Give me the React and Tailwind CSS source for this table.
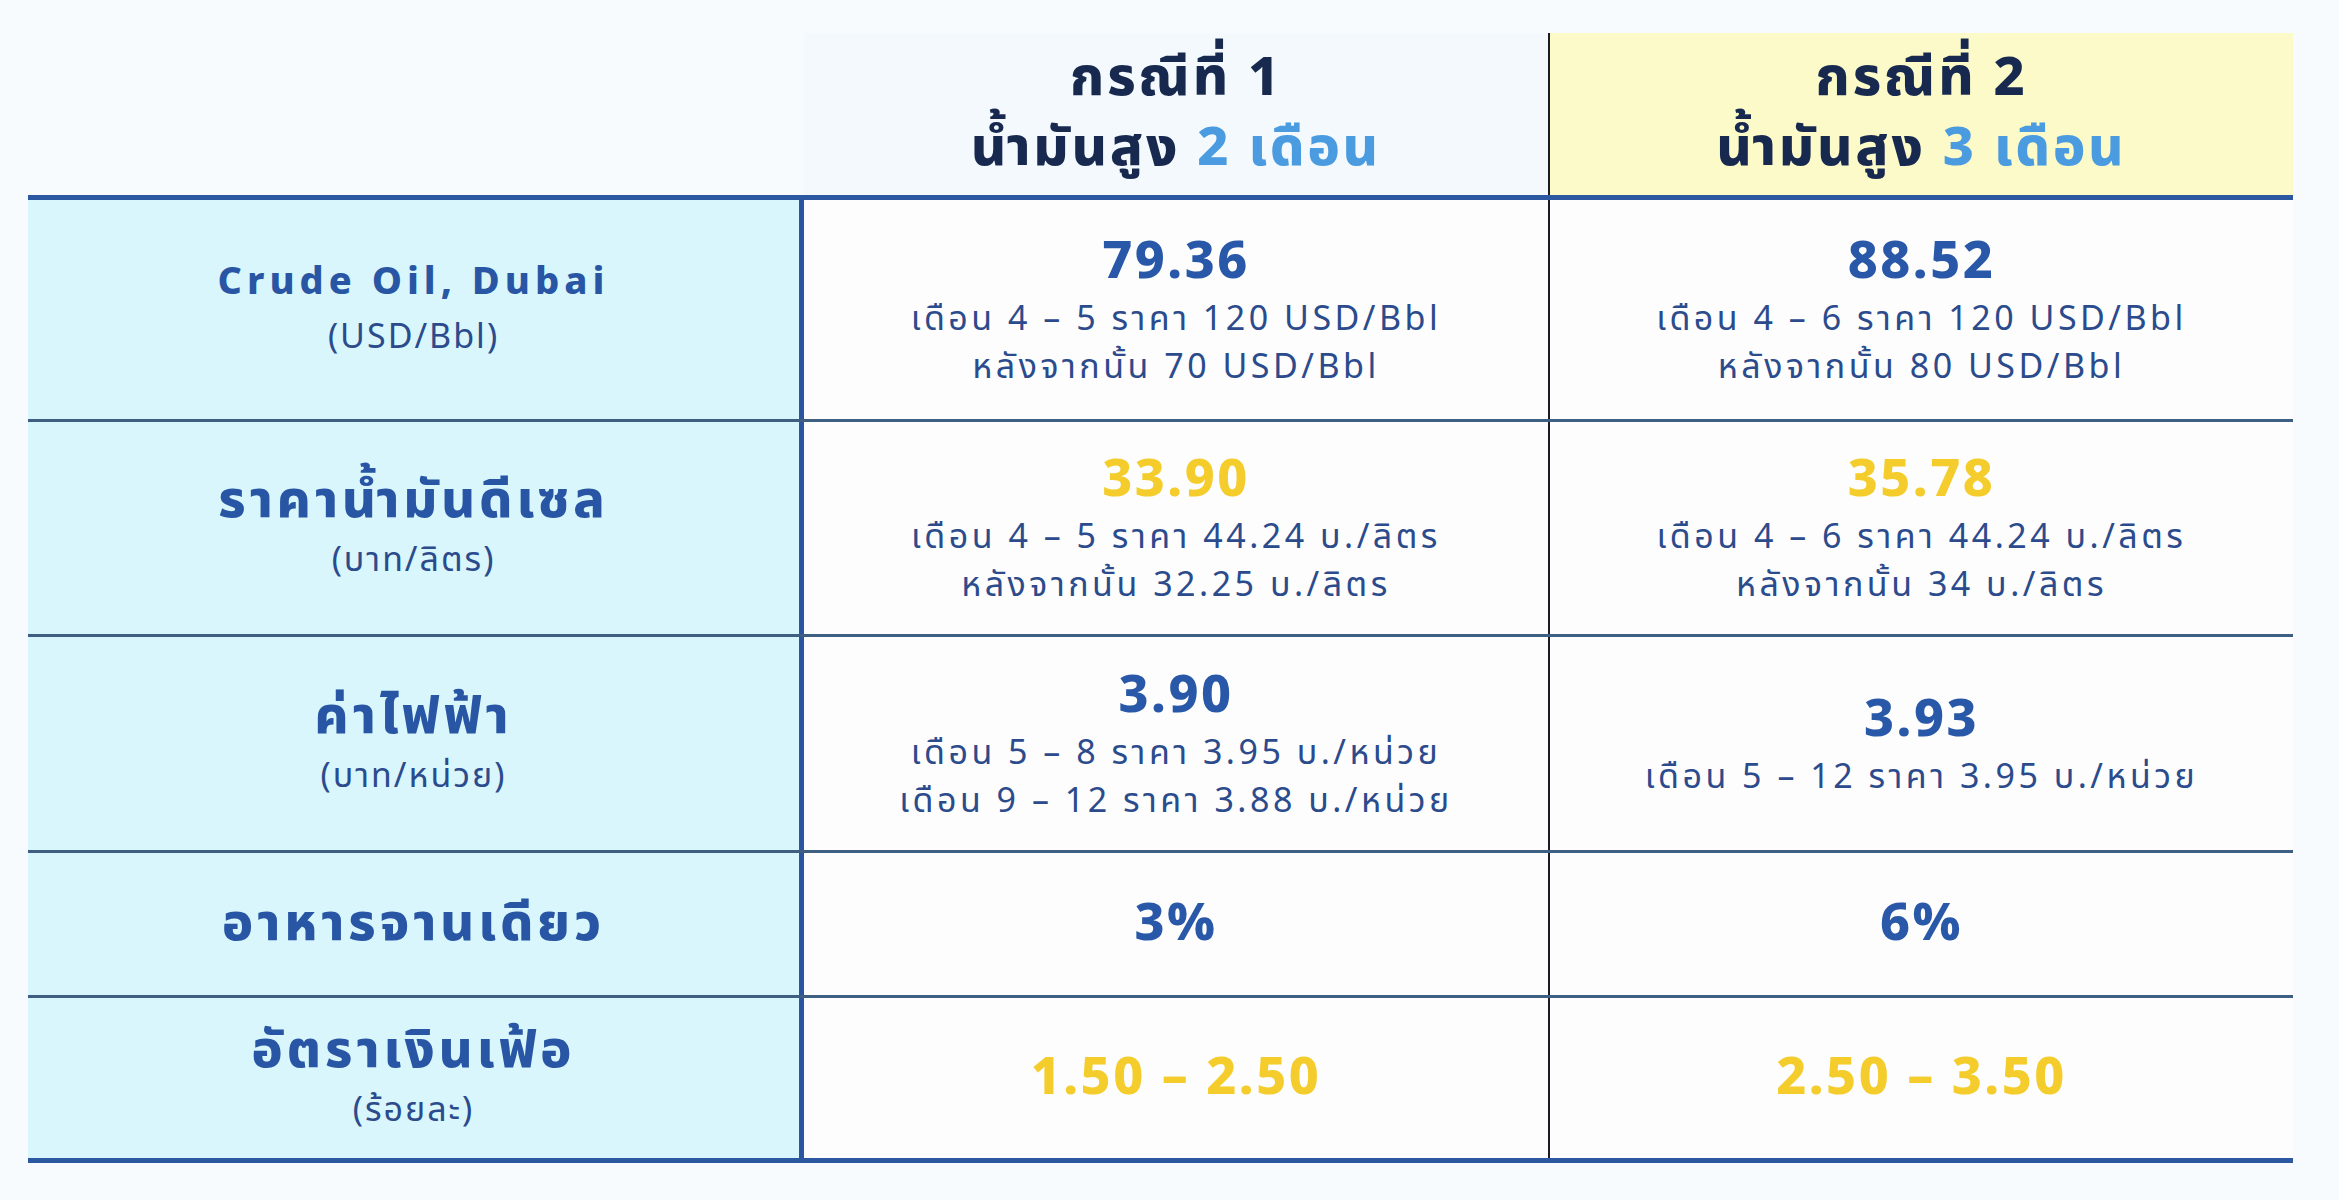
import React from "react";

const rows = [
  {
    label: "Crude Oil, Dubai",
    labelSize: "text-[38px] tracking-[5px] leading-[56px]",
    unit: "(USD/Bbl)",
    h: "h-[222px]",
    c1: { value: "79.36", yellow: false, lines: ["เดือน 4 – 5 ราคา 120 USD/Bbl", "หลังจากนั้น 70 USD/Bbl"] },
    c2: { value: "88.52", yellow: false, lines: ["เดือน 4 – 6 ราคา 120 USD/Bbl", "หลังจากนั้น 80 USD/Bbl"] },
  },
  {
    label: "ราคาน้ำมันดีเซล",
    labelSize: "text-[52px] tracking-[4px] leading-[66px]",
    unit: "(บาท/ลิตร)",
    h: "h-[215px]",
    c1: { value: "33.90", yellow: true, lines: ["เดือน 4 – 5 ราคา 44.24 บ./ลิตร", "หลังจากนั้น 32.25 บ./ลิตร"] },
    c2: { value: "35.78", yellow: true, lines: ["เดือน 4 – 6 ราคา 44.24 บ./ลิตร", "หลังจากนั้น 34 บ./ลิตร"] },
  },
  {
    label: "ค่าไฟฟ้า",
    labelSize: "text-[52px] tracking-[4px] leading-[66px]",
    unit: "(บาท/หน่วย)",
    h: "h-[216px]",
    c1: { value: "3.90", yellow: false, lines: ["เดือน 5 – 8 ราคา 3.95 บ./หน่วย", "เดือน 9 – 12 ราคา 3.88 บ./หน่วย"] },
    c2: { value: "3.93", yellow: false, lines: ["เดือน 5 – 12 ราคา 3.95 บ./หน่วย"] },
  },
  {
    label: "อาหารจานเดียว",
    labelSize: "text-[52px] tracking-[4px] leading-[66px]",
    unit: null,
    h: "h-[145px]",
    c1: { value: "3%", yellow: false, lines: [] },
    c2: { value: "6%", yellow: false, lines: [] },
  },
  {
    label: "อัตราเงินเฟ้อ",
    labelSize: "text-[52px] tracking-[4px] leading-[66px]",
    unit: "(ร้อยละ)",
    h: "h-[165px]",
    last: true,
    c1: { value: "1.50 – 2.50", yellow: true, lines: [] },
    c2: { value: "2.50 – 3.50", yellow: true, lines: [] },
  },
];

function ValueCell({ data, divider }) {
  return (
    <div
      className={
        "flex flex-col items-center justify-center bg-[#fcfdfc] " +
        (divider ? "border-l-2 border-[#1c1c24]" : "")
      }
    >
      <div
        className={
          "text-[52px] font-extrabold leading-[68px] tracking-[2.5px] " +
          (data.yellow ? "text-[#f4cd2c]" : "text-[#2a58a8]")
        }
      >
        {data.value}
      </div>
      {data.lines.length > 0 && (
        <div className="text-center text-[34px] leading-[48px] tracking-[3.5px] text-[#2b4b8c]">
          {data.lines.map((line, i) => (
            <React.Fragment key={i}>
              {i > 0 && <br />}
              {line}
            </React.Fragment>
          ))}
        </div>
      )}
    </div>
  );
}

export default function App() {
  return (
    <div
      className="min-h-screen w-full bg-[#f8fbfd] pl-[28px] pt-[33px]"
      style={{ fontFamily: '"Noto Sans Thai", "Noto Sans", "DejaVu Sans", sans-serif' }}
    >
      <div className="w-[2265px]">
        {/* header */}
        <div className="grid grid-cols-[776px_744px_745px] border-b-[5px] border-[#2b58a0]">
          <div />
          <div className="flex h-[162px] flex-col items-center justify-center bg-[#f3f9fd] text-[54px] font-extrabold leading-[70px] tracking-[3px] text-[#17294f]">
            <div>กรณีที่ 1</div>
            <div>
              น้ำมันสูง <span className="text-[#4a9be0]">2 เดือน</span>
            </div>
          </div>
          <div className="flex h-[162px] flex-col items-center justify-center border-l-2 border-[#1c1c24] bg-[#fdfac9] text-[54px] font-extrabold leading-[70px] tracking-[3px] text-[#17294f]">
            <div>กรณีที่ 2</div>
            <div>
              น้ำมันสูง <span className="text-[#4a9be0]">3 เดือน</span>
            </div>
          </div>
        </div>

        {/* body */}
        {rows.map((row, i) => (
          <div
            key={i}
            className={
              "grid grid-cols-[776px_744px_745px] " +
              row.h +
              " " +
              (row.last ? "border-b-[5px] border-[#2b58a0]" : "border-b-[3px] border-[#3f5f82]")
            }
          >
            <div className="flex flex-col items-center justify-center border-r-[5px] border-[#2b55a0] bg-[#d8f6fb]">
              <div className={row.labelSize + " font-extrabold text-[#2856a4]"}>{row.label}</div>
              {row.unit && <div className="text-[34px] leading-[54px] tracking-[2px] text-[#2b4b8c]">{row.unit}</div>}
            </div>
            <ValueCell data={row.c1} />
            <ValueCell data={row.c2} divider />
          </div>
        ))}
      </div>
    </div>
  );
}
